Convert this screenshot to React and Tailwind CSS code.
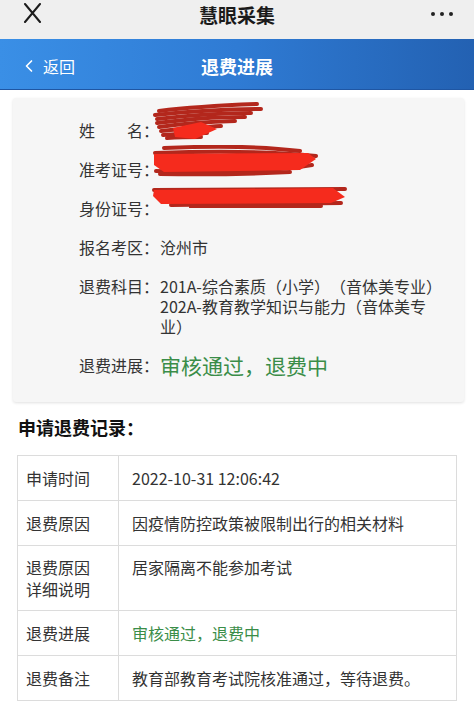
import { ChevronLeft } from 'lucide-react';

const FONT = { fontFamily: '"Noto Sans CJK SC", "Noto Sans", sans-serif' };

function Scribble({ className, w, h, band, strokes }) {
  return (
    <svg className={className} width={w} height={h} viewBox={`0 0 ${w} ${h}`} fill="none">
      {strokes.map((d) => (
        <path key={d} d={d} stroke="#b3271c" strokeWidth="4" strokeLinecap="round" />
      ))}
      <path d={band} fill="#f52b1d" />
    </svg>
  );
}

const records = [
  { label: ['申请时间'], value: '2022-10-31 12:06:42' },
  { label: ['退费原因'], value: '因疫情防控政策被限制出行的相关材料' },
  { label: ['退费原因', '详细说明'], value: '居家隔离不能参加考试', tall: true },
  { label: ['退费进展'], value: '审核通过，退费中', green: true },
  { label: ['退费备注'], value: '教育部教育考试院核准通过，等待退费。' },
];

export default function App() {
  return (
    <div className="w-[474px] h-[712px] bg-white overflow-hidden text-[#333] [text-spacing-trim:space-all]" style={FONT}>
      {/* ── WeChat top bar ── */}
      <div className="h-[39px] bg-[#efefef] grid grid-cols-[1fr_auto_1fr] items-start">
        <div className="pl-[23px] pt-[3px]">
          <svg width="19" height="20" viewBox="0 0 19 20">
            <path d="M2 1 L17 19 M17 1 L2 19" stroke="#1c1c1c" strokeWidth="2" strokeLinecap="round" />
          </svg>
        </div>
        <div className="text-[19px] leading-[28px] font-bold text-[#1a1a1a] pt-[1px]">慧眼采集</div>
        <div className="flex justify-end gap-[5px] pr-[21px] pt-[12px]">
          <span className="w-[4px] h-[4px] rounded-full bg-[#222]" />
          <span className="w-[4px] h-[4px] rounded-full bg-[#222]" />
          <span className="w-[4px] h-[4px] rounded-full bg-[#222]" />
        </div>
      </div>

      {/* ── Blue header ── */}
      <div className="h-[51px] bg-gradient-to-r from-[#3a8fe6] via-[#2f7bd4] to-[#2361b2] border-b border-[#1f56a3] grid grid-cols-[1fr_auto_1fr] items-center text-white">
        <div className="flex items-center pl-[19px] pt-[3px] gap-[4px]">
          <ChevronLeft size={20} strokeWidth={2} />
          <span className="text-[16px] leading-[22px]">返回</span>
        </div>
        <div className="text-[18px] leading-[24px] font-bold pt-[3px]">退费进展</div>
        <div />
      </div>

      {/* ── Info card ── */}
      <div className="mx-[13px] w-[451px] mt-[8px] bg-[#f6f6f6] rounded-[3px] shadow-[0_1px_3px_rgba(0,0,0,0.12)] pl-[66px] pt-[22px] pb-[27px] flex flex-col gap-[19px] text-[16px] leading-[20px]">
        <div className="flex">
          <span className="w-[81px] shrink-0">姓　　名：</span>
          <span className="relative">
            <Scribble
              className="absolute left-[-9px] top-[-18px]"
              w={114}
              h={40}
              band="M22 26 L50 20 L66 27 L44 37 L24 35 Z"
              strokes={[
                'M8 9 C40 5 80 3 106 2',
                'M4 13 C40 9 80 7 110 7',
                'M6 17 C40 13 70 11 100 11',
                'M6 21 C40 17 60 15 94 15',
                'M8 25 C30 22 50 20 84 19',
                'M10 29 C30 27 50 25 70 24',
                'M12 33 C28 32 40 31 56 31',
                'M16 36 C30 35 40 35 50 35',
              ]}
            />
          </span>
        </div>
        <div className="flex">
          <span className="w-[81px] shrink-0">准考证号：</span>
          <span className="relative">
            <Scribble
              className="absolute left-[-10px] top-[-14px]"
              w={170}
              h={32}
              band="M4 9 L158 8 L166 14 L150 25 L14 27 L4 20 Z"
              strokes={[
                'M14 3 C60 1 110 1 150 6',
                'M5 8 C60 6 120 6 166 11',
                'M6 26 C60 28 120 27 162 20',
                'M10 29 C60 30 100 29 140 27',
              ]}
            />
          </span>
        </div>
        <div className="flex">
          <span className="w-[81px] shrink-0">身份证号：</span>
          <span className="relative">
            <Scribble
              className="absolute left-[-9px] top-[-12px]"
              w={198}
              h={22}
              band="M3 4 L182 2 L194 11 L180 17 L10 18 L2 10 Z"
              strokes={['M3 4 L194 3', 'M20 19 L190 17', 'M40 21 L170 20']}
            />
          </span>
        </div>
        <div className="flex">
          <span className="w-[81px] shrink-0">报名考区：</span>
          <span>沧州市</span>
        </div>
        <div className="flex">
          <span className="w-[81px] shrink-0">退费科目：</span>
          <p className="whitespace-nowrap">
            201A-综合素质（小学）（音体美专业）
            <br />
            202A-教育教学知识与能力（音体美专
            <br />
            业）
          </p>
        </div>
        <div className="flex items-center">
          <span className="w-[81px] shrink-0">退费进展：</span>
          <span className="text-[21px] text-[#3a8d48]">审核通过，退费中</span>
        </div>
      </div>

      {/* ── Records ── */}
      <h3 className="mt-[12px] ml-[18px] text-[18px] leading-[26px] font-bold text-[#111]">申请退费记录：</h3>

      <div className="mt-[15px] mx-[17px] w-[440px] border border-[#dcdcdc] text-[16px] leading-[22px]">
        {records.map((r, i) => (
          <div
            key={i}
            className={`flex ${i < records.length - 1 ? 'border-b border-[#dcdcdc]' : ''}`}
          >
            <div className={`w-[101px] shrink-0 border-r border-[#dcdcdc] pl-[8px] ${r.tall ? 'py-[10px]' : 'py-[11px]'}`}>
              {r.label.map((l) => (
                <div key={l}>{l}</div>
              ))}
            </div>
            <div className={`pl-[13px] ${r.tall ? 'py-[10px]' : 'py-[11px]'} ${r.green ? 'text-[#3a8d48]' : ''}`}>
              {r.value}
            </div>
          </div>
        ))}
      </div>
    </div>
  );
}
